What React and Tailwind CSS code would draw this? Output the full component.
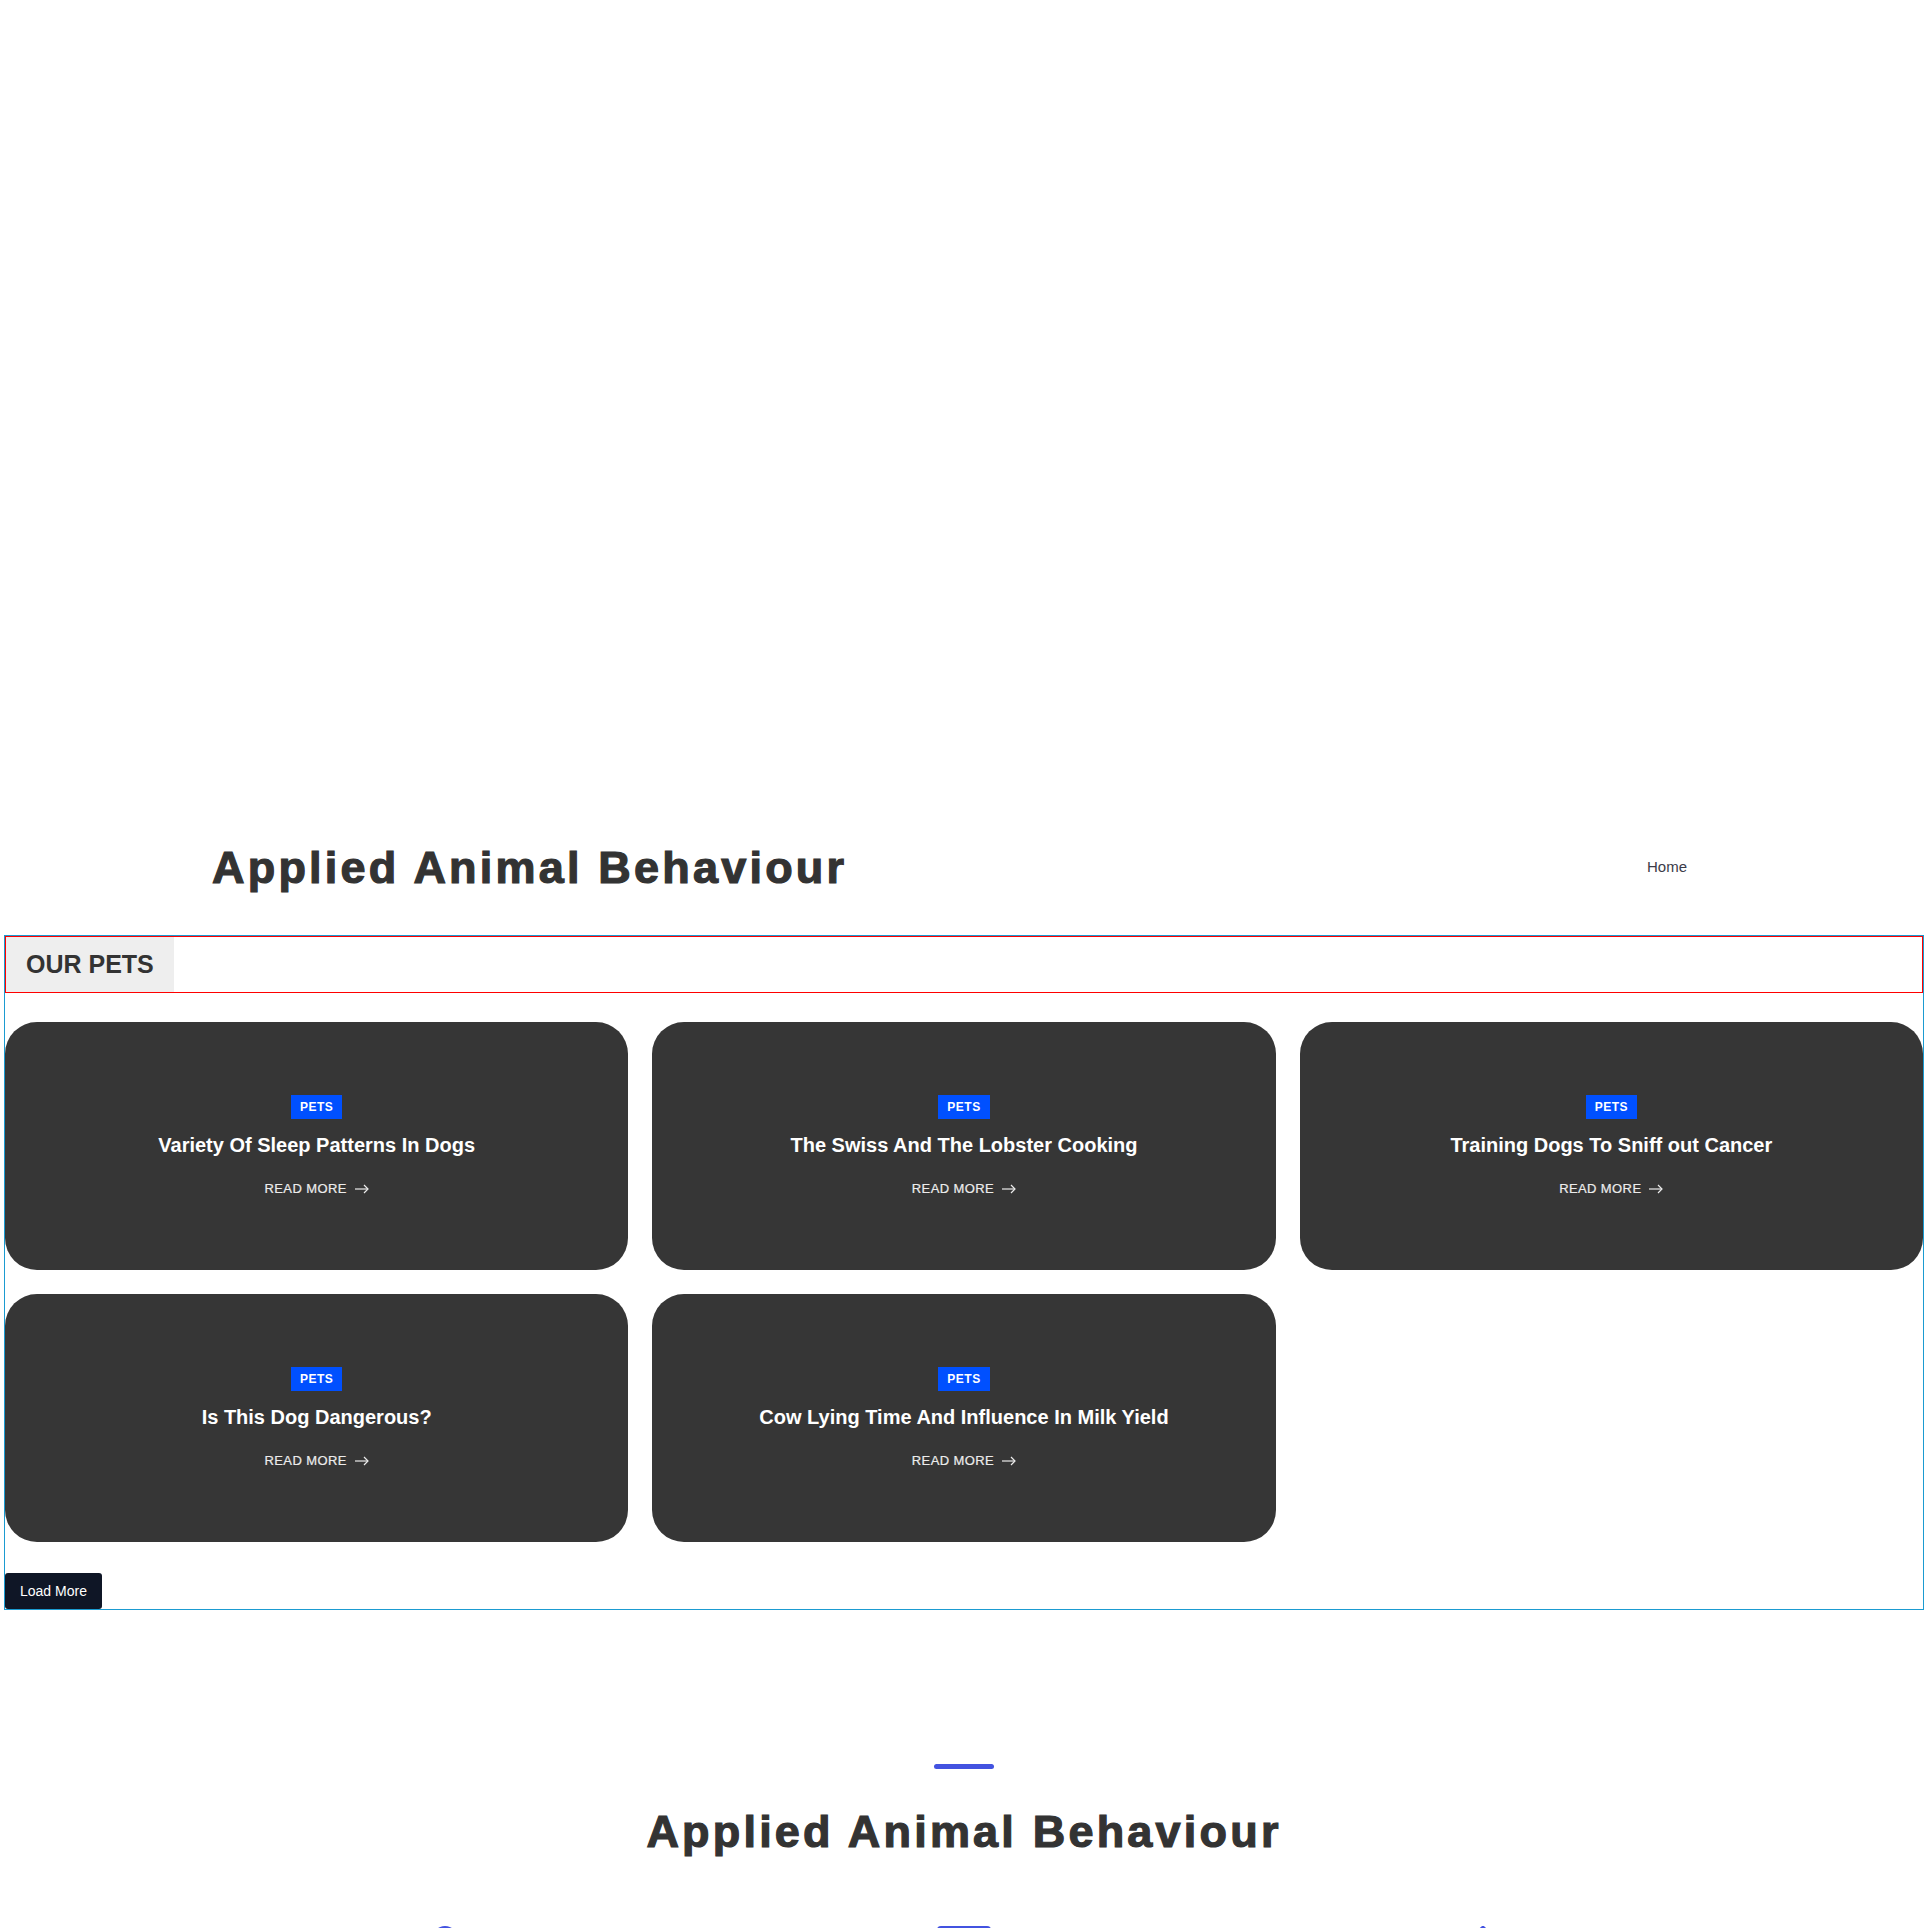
import React from "react";

const posts = [
  "Variety Of Sleep Patterns In Dogs",
  "The Swiss And The Lobster Cooking",
  "Training Dogs To Sniff out Cancer",
  "Is This Dog Dangerous?",
  "Cow Lying Time And Influence In Milk Yield",
];

function Arrow() {
  return (
    <svg width="14" height="10" viewBox="0 0 14 10" fill="none" stroke="currentColor" strokeWidth="1.2">
      <path d="M0 5h13" />
      <path d="M9 1l4 4-4 4" />
    </svg>
  );
}

function PostCard({ title }) {
  return (
    <div className="h-[248px] rounded-[32px] bg-[#363636] flex flex-col items-center justify-center text-center">
      <span className="h-[24px] px-[9px] flex items-center bg-[#0050ff] text-white text-[12px] font-bold tracking-[0.5px]">
        PETS
      </span>
      <h3 className="mt-[14px] text-[20px] leading-[24px] font-bold text-white">{title}</h3>
      <a className="mt-[24px] flex items-center gap-[8px] text-[13px] leading-4 tracking-[0.4px] text-[#ececec] [-webkit-text-stroke:0.2px_#ececec]">
        READ MORE
        <Arrow />
      </a>
    </div>
  );
}

export default function App() {
  return (
    <div className="min-h-screen bg-white text-[#333] font-['Liberation_Sans',Arial,sans-serif]">
      {/* hero placeholder */}
      <div className="h-[822px]" />

      <header className="h-[91px] flex items-center justify-between pl-[212px] pr-[241px]">
        <h1 className="text-[45px] leading-none font-bold tracking-[3.2px] text-[#333] [-webkit-text-stroke:1.2px_#333]">
          Applied Animal Behaviour
        </h1>
        <nav className="text-[15px] text-[#3b3b48]">Home</nav>
      </header>

      <section className="mx-1 mt-[22px] border border-[#1b9bd1]">
        <div className="h-[57px] border border-[#ff0000] flex">
          <div className="h-full bg-[#eeeeee] px-[20px] flex items-center">
            <h2 className="text-[25px] font-bold text-[#333] leading-none">OUR PETS</h2>
          </div>
        </div>

        <div className="mt-[29px] grid grid-cols-3 gap-[24px]">
          {posts.map((t) => (
            <PostCard key={t} title={t} />
          ))}
        </div>

        <button className="mt-[31px] h-[36px] px-[15px] rounded-[3px] bg-[#0f1626] text-white text-[14px] block">
          Load More
        </button>
      </section>

      <section className="pt-[154px] flex flex-col items-center">
        <div className="w-[60px] h-[5px] rounded-full bg-[#4353e0]" />
        <h2 className="mt-[40px] text-[45px] leading-none font-bold tracking-[3.2px] text-[#333] [-webkit-text-stroke:1.2px_#333]">
          Applied Animal Behaviour
        </h2>
        <div className="mt-[72px] w-[1557px] grid grid-cols-3 pb-[40px]">
          <div className="flex justify-center">
            <svg width="60" height="60" viewBox="0 0 24 24" fill="none" stroke="#4353e0" strokeWidth="2">
              <circle cx="12" cy="5" r="4" />
              <path d="M4 21v-2a4 4 0 0 1 4-4h8a4 4 0 0 1 4 4v2" />
            </svg>
          </div>
          <div className="flex justify-center">
            <svg width="60" height="60" viewBox="0 0 60 60" fill="#4353e0">
              <rect x="3" y="0" width="54" height="38" rx="4" />
              <rect x="24" y="40" width="12" height="10" />
              <rect x="14" y="50" width="32" height="5" rx="2" />
            </svg>
          </div>
          <div className="flex justify-center">
            <svg width="60" height="60" viewBox="0 0 24 24" fill="none" stroke="#4353e0" strokeWidth="2">
              <path d="M12 1l9 8v12H3V9z" />
            </svg>
          </div>
        </div>
      </section>
    </div>
  );
}
